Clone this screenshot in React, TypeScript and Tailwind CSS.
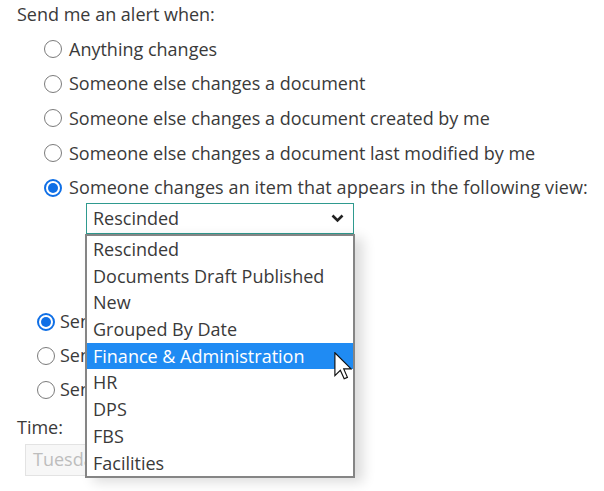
import React from "react"

const font = { fontFamily: '"Open Sans", "Noto Sans", sans-serif' }

const viewOptions = [
  "Rescinded",
  "Documents Draft Published",
  "New",
  "Grouped By Date",
  "Finance & Administration",
  "HR",
  "DPS",
  "FBS",
  "Facilities",
]

const Radio = ({ checked = false }: { checked?: boolean }) =>
  checked ? (
    <span className="flex w-[18px] h-[18px] shrink-0 items-center justify-center rounded-full border-2 border-[#0f6fe6]">
      <span className="w-[10px] h-[10px] rounded-full bg-[#0f6fe6]" />
    </span>
  ) : (
    <span className="w-[18px] h-[18px] shrink-0 rounded-full border border-[#7b7b7b]" />
  )

const Cursor = () => (
  <svg width="18" height="28" viewBox="0 0 12 19" className="absolute left-[334px] top-[352px]">
    <path d="M0.5 0.5 L0.5 16 L4.2 12.4 L6.8 18.2 L9 17.2 L6.5 11.5 L11.5 11.5 Z" fill="#fff" stroke="#111" strokeWidth="0.8" strokeLinejoin="miter" />
  </svg>
)

export default function App() {
  return (
    <div className="relative w-[604px] h-[491px] overflow-hidden bg-white text-[18px] text-[#3a3a3a]" style={font}>
      <div className="pl-[17px] pt-[1px] leading-[26px]">Send me an alert when:</div>

      <div className="flex flex-col pl-[44px] pt-[5px]">
        {[
          "Anything changes",
          "Someone else changes a document",
          "Someone else changes a document created by me",
          "Someone else changes a document last modified by me",
        ].map((label) => (
          <label key={label} className="flex items-center gap-[7px] h-[34.6px] whitespace-nowrap">
            <Radio />
            <span>{label}</span>
          </label>
        ))}
        <label className="flex items-center gap-[7px] h-[34.6px] whitespace-nowrap tracking-[0.1px]">
          <Radio checked />
          <span>Someone changes an item that appears in the following view:</span>
        </label>
      </div>

      <div className="ml-[86px] mt-[-2px] flex w-[268px] h-[31px] items-center justify-between border border-[#2f9a8f] pl-[6px] pr-[9px]">
        <span>Rescinded</span>
        <svg width="13" height="9" viewBox="0 0 13 9">
          <path d="M1.5 1.5 L6.5 6.5 L11.5 1.5" fill="none" stroke="#222" strokeWidth="2.6" />
        </svg>
      </div>

      {/* delivery options, partly hidden behind the open list */}
      <div className="flex flex-col pl-[37px] pt-[71px]">
        {["Send notification immediately", "Send a daily summary", "Send a weekly summary"].map((label, i) => (
          <label key={label} className="flex items-center gap-[5px] h-[34px] whitespace-nowrap">
            <Radio checked={i === 0} />
            <span className="w-[26px] overflow-hidden">{label}</span>
          </label>
        ))}
      </div>

      <div className="pl-[17px] pt-[7px] leading-[26px]">Time:</div>
      <div className="ml-[25px] mt-[4px] flex w-[62px] h-[32px] items-center overflow-hidden whitespace-nowrap border border-r-0 border-[#e3e3e3] bg-[#f7f7f7] pl-[7px] text-[#bdbdbd]">
        Tuesday
      </div>

      <div className="absolute left-[85px] top-[234px] w-[270px] h-[244px] border-2 border-[#858585] bg-white shadow-[8px_4px_12px_rgba(0,0,0,0.14)]">
        {viewOptions.map((opt) => (
          <div
            key={opt}
            className={
              opt === "Finance & Administration"
                ? "h-[26.7px] pl-[6px] leading-[26.7px] bg-[#1f8bf3] text-white"
                : "h-[26.7px] pl-[6px] leading-[26.7px]"
            }
          >
            {opt}
          </div>
        ))}
      </div>

      <Cursor />
    </div>
  )
}
